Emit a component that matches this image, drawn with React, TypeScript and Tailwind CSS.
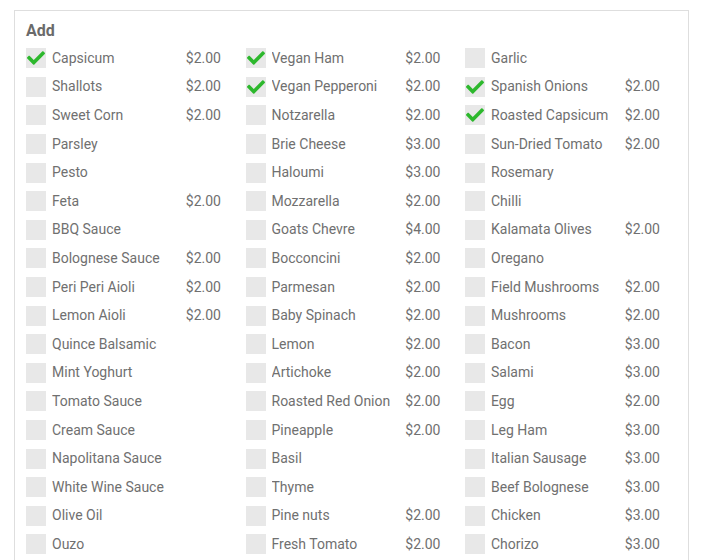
import React from "react";

type Item = { name: string; price?: string; checked?: boolean };

const col1: Item[] = [
  { name: "Capsicum", price: "$2.00", checked: true },
  { name: "Shallots", price: "$2.00" },
  { name: "Sweet Corn", price: "$2.00" },
  { name: "Parsley" },
  { name: "Pesto" },
  { name: "Feta", price: "$2.00" },
  { name: "BBQ Sauce" },
  { name: "Bolognese Sauce", price: "$2.00" },
  { name: "Peri Peri Aioli", price: "$2.00" },
  { name: "Lemon Aioli", price: "$2.00" },
  { name: "Quince Balsamic" },
  { name: "Mint Yoghurt" },
  { name: "Tomato Sauce" },
  { name: "Cream Sauce" },
  { name: "Napolitana Sauce" },
  { name: "White Wine Sauce" },
  { name: "Olive Oil" },
  { name: "Ouzo" },
];

const col2: Item[] = [
  { name: "Vegan Ham", price: "$2.00", checked: true },
  { name: "Vegan Pepperoni", price: "$2.00", checked: true },
  { name: "Notzarella", price: "$2.00" },
  { name: "Brie Cheese", price: "$3.00" },
  { name: "Haloumi", price: "$3.00" },
  { name: "Mozzarella", price: "$2.00" },
  { name: "Goats Chevre", price: "$4.00" },
  { name: "Bocconcini", price: "$2.00" },
  { name: "Parmesan", price: "$2.00" },
  { name: "Baby Spinach", price: "$2.00" },
  { name: "Lemon", price: "$2.00" },
  { name: "Artichoke", price: "$2.00" },
  { name: "Roasted Red Onion", price: "$2.00" },
  { name: "Pineapple", price: "$2.00" },
  { name: "Basil" },
  { name: "Thyme" },
  { name: "Pine nuts", price: "$2.00" },
  { name: "Fresh Tomato", price: "$2.00" },
];

const col3: Item[] = [
  { name: "Garlic" },
  { name: "Spanish Onions", price: "$2.00", checked: true },
  { name: "Roasted Capsicum", price: "$2.00", checked: true },
  { name: "Sun-Dried Tomato", price: "$2.00" },
  { name: "Rosemary" },
  { name: "Chilli" },
  { name: "Kalamata Olives", price: "$2.00" },
  { name: "Oregano" },
  { name: "Field Mushrooms", price: "$2.00" },
  { name: "Mushrooms", price: "$2.00" },
  { name: "Bacon", price: "$3.00" },
  { name: "Salami", price: "$3.00" },
  { name: "Egg", price: "$2.00" },
  { name: "Leg Ham", price: "$3.00" },
  { name: "Italian Sausage", price: "$3.00" },
  { name: "Beef Bolognese", price: "$3.00" },
  { name: "Chicken", price: "$3.00" },
  { name: "Chorizo", price: "$3.00" },
];

const CheckIcon = () => (
  <svg viewBox="0 0 512 512" className="w-[18px] h-[18px] fill-[#2db82d]">
    <path d="M173.898 439.404l-166.4-166.4c-9.997-9.997-9.997-26.206 0-36.204l36.203-36.204c9.997-9.998 26.207-9.998 36.204 0L192 312.69 432.095 72.596c9.997-9.997 26.207-9.997 36.204 0l36.203 36.204c9.997 9.997 9.997 26.206 0 36.204l-294.4 294.401c-9.998 9.997-26.207 9.997-36.204-.001z" />
  </svg>
);

const Row: React.FC<{ item: Item }> = ({ item }) => (
  <label className="flex items-center h-[28.6px] w-[195px] cursor-pointer">
    <span className="w-5 h-5 shrink-0 bg-[#e8e8e8] flex items-center justify-center">
      {item.checked && <CheckIcon />}
    </span>
    <span className="ml-[6px] flex-1 truncate">{item.name}</span>
    {item.price && <span>{item.price}</span>}
  </label>
);

export default function App() {
  const columns = [col1, col2, col3];

  return (
    <div
      className="bg-white min-h-[560px] pt-[10px] pl-[14px] pr-[13px] text-[14px] text-[#707070]"
      style={{ fontFamily: "Roboto, 'Liberation Sans', sans-serif" }}
    >
      <div className="border border-[#dedede] border-b-0 pl-[11px] pt-[10px] min-h-[550px]">
        <h3 className="text-[16px] font-bold text-[#6a6a6a] leading-5 mb-[3px]">
          Add
        </h3>
        <div className="flex">
          {columns.map((col, i) => (
            <div key={i} className="w-[219.5px] flex flex-col">
              {col.map((item) => (
                <Row key={item.name} item={item} />
              ))}
            </div>
          ))}
        </div>
      </div>
    </div>
  );
}
